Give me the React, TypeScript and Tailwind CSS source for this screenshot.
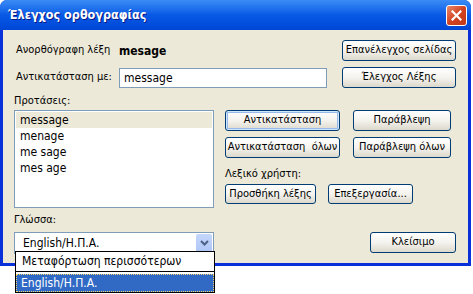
import React from "react";

const font = { fontFamily: "Tahoma, 'DejaVu Sans Condensed', 'Liberation Sans', sans-serif" };

const btn =
  "flex items-center justify-center whitespace-pre rounded-[3px] border border-[#003c74] bg-gradient-to-b from-white via-[#f4f3ee] to-[#dcd8cc] text-[11px] text-black";

function Btn({ label, className, primary }: { label: string; className: string; primary?: boolean }) {
  return (
    <div
      className={`${btn} ${className} ${
        primary ? "shadow-[inset_0_0_0_1px_#cee7ff,inset_0_0_0_2px_#98b8ea]" : ""
      }`}
    >
      {label}
    </div>
  );
}

const suggestions = ["message", "menage", "me sage", "mes age"];

export default function App() {
  return (
    <div className="relative h-[294px] w-[473px] overflow-hidden bg-white text-[11px] text-black" style={font}>
      <div className="flex h-[266px] w-[471px] flex-col rounded-t-[7px] bg-[#0831d9] px-[3px] pb-[3px]">
        {/* title bar */}
        <div className="-mx-[3px] flex h-[30px] items-center justify-between rounded-t-[7px] bg-gradient-to-b from-[#3b8cf5] via-[#0859e6] to-[#0046d5] pl-[8px] pr-[4px]">
          <span
            className="text-[12.5px] font-bold text-white [text-shadow:1px_1px_#0a1883]"
            style={{ fontFamily: "'DejaVu Sans Condensed', 'Liberation Sans', sans-serif" }}
          >
            Έλεγχος ορθογραφίας
          </span>
          <div className="flex h-[21px] w-[21px] items-center justify-center rounded-[3px] border border-white bg-gradient-to-br from-[#e8876a] via-[#d2421f] to-[#c0381a]">
            <svg width="11" height="11" viewBox="0 0 11 11">
              <path d="M1.5 1.5L9.5 9.5M9.5 1.5L1.5 9.5" stroke="white" strokeWidth="2.2" strokeLinecap="square" />
            </svg>
          </div>
        </div>

        {/* body */}
        <div className="flex flex-1 flex-col bg-[#ece9d8] pl-[11px] pr-[12px]">
          <div className="mt-[10px] flex h-[21px] items-center">
            <span className="ml-[2px] w-[103px]">Ανορθόγραφη λέξη</span>
            <span className="font-bold text-[12px]">mesage</span>
            <Btn label="Επανέλεγχος σελίδας" className="ml-auto h-[21px] w-[114px]" />
          </div>
          <div className="mt-[6px] flex h-[21px] items-center">
            <span className="ml-[2px] w-[103px]">Αντικατάσταση με:</span>
            <div className="flex h-[20px] w-[208px] items-center border border-[#7f9db9] bg-white pl-[4px] text-[12px]">
              message
            </div>
            <Btn label="Έλεγχος Λέξης" className="ml-auto h-[21px] w-[114px]" />
          </div>
          <div className="mt-[5px] h-[16px] leading-[16px]">Προτάσεις:</div>
          <div className="mt-[1px] flex">
            <div className="flex h-[98px] w-[200px] flex-col border border-[#7f9db9] bg-white p-[1px] text-[12px]">
              {suggestions.map((s, i) => (
                <div key={s} className={`h-[16px] pl-[4px] leading-[16px] ${i === 0 ? "bg-[#ece9d8]" : ""}`}>
                  {s}
                </div>
              ))}
            </div>
            <div className="ml-[11px] flex flex-col">
              <div className="flex gap-[13px]">
                <Btn label="Αντικατάσταση" className="h-[21px] w-[115px]" primary />
                <Btn label="Παράβλεψη" className="h-[21px] w-[98px]" />
              </div>
              <div className="mt-[6px] flex gap-[13px]">
                <Btn label="Αντικατάσταση  όλων" className="h-[21px] w-[115px]" />
                <Btn label="Παράβλεψη όλων" className="h-[21px] w-[98px]" />
              </div>
              <div className="mt-[9px] h-[14px] leading-[14px]">Λεξικό χρήστη:</div>
              <div className="mt-[3px] flex gap-[12px]">
                <Btn label="Προσθήκη λέξης" className="h-[20px] w-[91px]" />
                <Btn label="Επεξεργασία..." className="h-[20px] w-[85px]" />
              </div>
            </div>
          </div>
          <div className="mt-[5px] h-[14px] leading-[14px]">Γλώσσα:</div>
          <div className="mt-[5px] flex items-start">
            <div className="flex h-[22px] w-[200px] items-center border border-[#7f9db9] bg-white pl-[8px] pr-[1px] text-[12px]">
              <span className="flex-1">English/Η.Π.Α.</span>
              <div className="flex h-[19px] w-[16px] items-center justify-center rounded-[2px] bg-gradient-to-b from-[#c4d6fc] to-[#aec6f6]">
                <svg width="9" height="6" viewBox="0 0 9 6">
                  <path d="M1 1L4.5 4.5L8 1" stroke="#4d6185" strokeWidth="2" fill="none" />
                </svg>
              </div>
            </div>
            <Btn label="Κλείσιμο" className="ml-auto h-[21px] w-[86px]" />
          </div>
        </div>
      </div>

      {/* open dropdown list */}
      <div className="absolute left-[15px] top-[251px] w-[200px] border border-black bg-white text-[12px]">
        <div className="h-[19px] pl-[6px] leading-[19px]">Μεταφόρτωση περισσότερων</div>
        <div className="h-px bg-black" />
        <div className="mt-[2px] h-[18px] border border-dotted border-[#f5d46a] bg-[#316ac5] pl-[4px] leading-[16px] text-white">
          English/Η.Π.Α.
        </div>
      </div>
    </div>
  );
}
